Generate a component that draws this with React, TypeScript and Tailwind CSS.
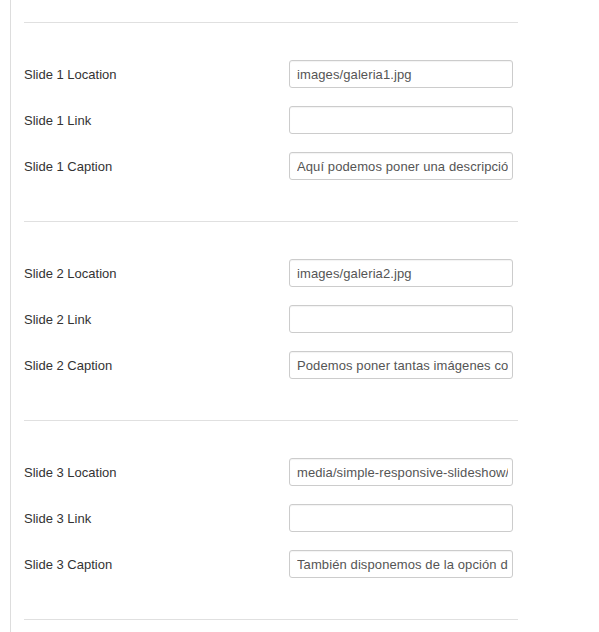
const slides = [
  {
    n: 1,
    location: "images/galeria1.jpg",
    caption: "Aquí podemos poner una descripción de la imagen",
  },
  {
    n: 2,
    location: "images/galeria2.jpg",
    caption: "Podemos poner tantas imágenes como queramos",
  },
  {
    n: 3,
    location: "media/simple-responsive-slideshow/3.jpg",
    caption: "También disponemos de la opción de poner enlaces",
  },
];

function Field({ label, value }: { label: string; value: string }) {
  return (
    <div className="flex items-center h-[28px]">
      <label className="w-[265px] mt-[2px] text-[13px] text-[#333]">{label}</label>
      <input
        type="text"
        readOnly
        value={value}
        className="w-[224px] h-[28px] pl-[7px] pr-[4px] border border-[#cccccc] rounded-[3px] bg-white text-[13px] tracking-[0.1px] text-[#555] outline-none shadow-[inset_0_1px_1px_rgba(0,0,0,0.05)]"
      />
    </div>
  );
}

export default function App() {
  return (
    <div
      className="min-h-[632px] bg-white"
      style={{ fontFamily: '"Liberation Sans", Arial, sans-serif' }}
    >
      <div className="ml-[10px] min-h-[632px] border-l border-[#dddddd] pl-[13px] pt-[22px]">
        <div className="w-[494px]">
          <div className="h-px bg-[#e0e0e0]" />
          {slides.map((s) => (
            <div key={s.n}>
              <div className="pt-[37px] pb-[41px] flex flex-col gap-[18px]">
                <Field label={`Slide ${s.n} Location`} value={s.location} />
                <Field label={`Slide ${s.n} Link`} value="" />
                <Field label={`Slide ${s.n} Caption`} value={s.caption} />
              </div>
              <div className="h-px bg-[#e0e0e0]" />
            </div>
          ))}
        </div>
      </div>
    </div>
  );
}
